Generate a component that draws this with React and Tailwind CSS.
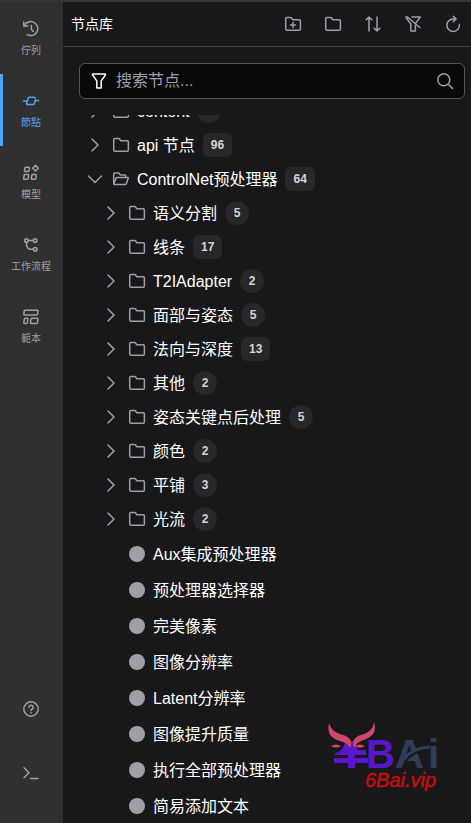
import React, { useState } from "react";

const sideTabs = [
  { id: "queue", label: "佇列" },
  { id: "nodes", label: "節點" },
  { id: "models", label: "模型" },
  { id: "workflows", label: "工作流程" },
  { id: "templates", label: "範本" },
];

const tree = [
  { name: "content", count: 7 },
  { name: "api 节点", count: 96 },
  {
    name: "ControlNet预处理器",
    count: 64,
    open: true,
    folders: [
      { name: "语义分割", count: 5 },
      { name: "线条", count: 17 },
      { name: "T2IAdapter", count: 2 },
      { name: "面部与姿态", count: 5 },
      { name: "法向与深度", count: 13 },
      { name: "其他", count: 2 },
      { name: "姿态关键点后处理", count: 5 },
      { name: "颜色", count: 2 },
      { name: "平铺", count: 3 },
      { name: "光流", count: 2 },
    ],
    nodes: [
      "Aux集成预处理器",
      "预处理器选择器",
      "完美像素",
      "图像分辨率",
      "Latent分辨率",
      "图像提升质量",
      "执行全部预处理器",
      "简易添加文本",
    ],
  },
];

const iconPaths = {
  queue: (
    <>
      <path d="M.8 1v4h4" />
      <path d="M1.4 4.8A7 7 0 1 1 4.2 13.6" />
      <path d="M8.4 4.6v3.9l2 2" />
    </>
  ),
  nodes: (
    <>
      <path d="M.5 8h3.2M12.2 7.5h3.3" />
      <path d="M12.4 5.4l-.3-.6a1 1 0 0 0-.9-.6H6.2a1 1 0 0 0-.9.6L3.7 10a1 1 0 0 0 .9 1.6h5.6a1 1 0 0 0 .9-.6l1.3-3.7" />
    </>
  ),
  models: (
    <>
      <path d="M12.5.4l2.8 2.8L12.5 6 9.7 3.2z" />
      <path d="M3.1 2.2h2.6a.8.8 0 0 1 .8.9l-.4 2.5a1 1 0 0 1-1 .8H2.3a.8.8 0 0 1-.8-.9L2 3a1 1 0 0 1 1.1-.8z" />
      <path d="M2.2 9.6h2.6a.8.8 0 0 1 .8.9l-.4 2.9a1 1 0 0 1-1 .8H1.4a.8.8 0 0 1-.8-.9l.5-2.9a1 1 0 0 1 1.1-.8zM9.9 9.6h2.6a.8.8 0 0 1 .8.9l-.4 2.9a1 1 0 0 1-1 .8H9.1a.8.8 0 0 1-.8-.9l.5-2.9a1 1 0 0 1 1.1-.8z" />
    </>
  ),
  workflows: (
    <>
      <circle cx="3.4" cy="3.5" r="1.8" />
      <circle cx="12.2" cy="3.5" r="1.8" />
      <circle cx="12.2" cy="12.3" r="1.8" />
      <path d="M5.2 3.5h5.2M3.4 5.3c0 3.4.6 7 4 7h3" />
    </>
  ),
  templates: (
    <>
      <path d="M2.2 1.3h12a.8.8 0 0 1 .8.9l-.4 2.9a1 1 0 0 1-1 .8H1.6a.8.8 0 0 1-.8-.9l.4-2.9a1 1 0 0 1 1-.8z" />
      <path d="M2.4 9.3H4a.8.8 0 0 1 .8.9l-.5 3.5a1 1 0 0 1-1 .8H1.6a.8.8 0 0 1-.8-.9l.6-3.5a1 1 0 0 1 1-.8zM9 9.3h5.2a.8.8 0 0 1 .8.9l-.5 3.5a1 1 0 0 1-1 .8H8.2a.8.8 0 0 1-.8-.9l.6-3.5a1 1 0 0 1 1-.8z" />
    </>
  ),
  help: (
    <>
      <circle cx="8" cy="8" r="7.2" />
      <path d="M5.9 6.3a2.1 2.1 0 1 1 3 1.9c-.6.3-.9.6-.9 1.2M8 11.6v.4" />
    </>
  ),
  terminal: <path d="M1 2.8l5 5-5 5M7.5 13.4h7.5" />,
  folder: (
    <path d="M2 1.4h3.5a1 1 0 0 1 .8.4l1.5 2h6.4a1.2 1.2 0 0 1 1.2 1.2v8a1.3 1.3 0 0 1-1.3 1.3H2A1.3 1.3 0 0 1 .7 13V2.7A1.3 1.3 0 0 1 2 1.4z" />
  ),
  folderPlus: (
    <>
      <path d="M2 1.4h3.5a1 1 0 0 1 .8.4l1.5 2h6.4a1.2 1.2 0 0 1 1.2 1.2v8a1.3 1.3 0 0 1-1.3 1.3H2A1.3 1.3 0 0 1 .7 13V2.7A1.3 1.3 0 0 1 2 1.4z" />
      <path d="M8 6.4v5M5.5 8.9h5" />
    </>
  ),
  folderOpen: (
    <>
      <path d="M12.8 6.4V5a1 1 0 0 0-1-1H7.4L5.8 2H1.7a1 1 0 0 0-1 1v10.2" />
      <path d="M4 6.5h10.7a.6.6 0 0 1 .6.8L13.2 13a1 1 0 0 1-.9.6H1a.4.4 0 0 1-.3-.5L3.1 7.1a1 1 0 0 1 .9-.6z" />
    </>
  ),
  sort: (
    <path d="M4 15V1M1.2 3.8L4 1l2.8 2.8M12 1v14M9.2 12.2L12 15l2.8-2.8" />
  ),
  filter: (
    <path d="M2 1h12c.5 0 .8.6.4 1L10.2 7.9V15H5.8V7.9L1.6 2c-.4-.4-.1-1 .4-1z" />
  ),
  filterSlash: (
    <>
      <path d="M7 1h8.3L10.6 7.4M.7 1L5.8 8v7h4.6V9.5" />
      <path d="M2.2.8l12.6 10.7" />
    </>
  ),
  refresh: (
    <>
      <path d="M14.4 8.6A6.3 6.3 0 1 1 8.3 2.9h2.5" />
      <path d="M8.2.3l2.7 2.6-2.7 2.7" />
    </>
  ),
  search: (
    <>
      <circle cx="6.8" cy="6.8" r="6" />
      <path d="M11.2 11.2l4.3 4.3" />
    </>
  ),
  right: <path d="M5 2l6 6-6 6" />,
  down: <path d="M1.5 5L8 11.5 14.5 5" />,
};

function Icon({ name, className = "size-4", width = 1.5 }) {
  return (
    <svg
      viewBox="0 0 16 16"
      fill="none"
      stroke="currentColor"
      strokeWidth={width}
      strokeLinecap="round"
      strokeLinejoin="round"
      className={`shrink-0 overflow-visible ${className}`}
      aria-hidden="true"
    >
      {iconPaths[name]}
    </svg>
  );
}

function Folder({ folder, depth = 0 }) {
  const [open, setOpen] = useState(!!folder.open);

  return (
    <li>
      <button
        onClick={() => setOpen(!open)}
        aria-expanded={open}
        className={`flex h-[34px] w-full items-center text-left text-base text-white ${
          depth ? "pl-[34px]" : "pl-[18px]"
        }`}
      >
        <span className="mr-1 flex w-7 justify-center text-zinc-400">
          <Icon name={open ? "down" : "right"} />
        </span>
        <Icon
          name={open ? "folderOpen" : "folder"}
          className="size-4 text-zinc-400"
        />
        <span className="ml-2 pt-0.5 whitespace-nowrap">{folder.name}</span>
        <span
          className={`ml-2 flex h-6 items-center justify-center bg-zinc-800 text-xs font-bold text-zinc-300 ${
            folder.count > 9 ? "rounded-md px-2" : "w-6 rounded-full"
          }`}
        >
          {folder.count}
        </span>
      </button>
      {open && folder.folders && (
        <ul>
          {folder.folders.map((child) => (
            <Folder key={child.name} folder={child} depth={1} />
          ))}
          {folder.nodes.map((node) => (
            <li key={node}>
              <button className="flex h-9 w-full items-center gap-2 pl-[66px] text-left text-base whitespace-nowrap text-white">
                <span className="size-4 rounded-full bg-zinc-400" />
                <span className="pt-0.5">{node}</span>
              </button>
            </li>
          ))}
        </ul>
      )}
    </li>
  );
}

function Logo() {
  return (
    <svg
      viewBox="0 0 116 78"
      className="pointer-events-none absolute right-[28px] bottom-[29px] w-[116px] overflow-visible"
    >
      {/* bull head */}
      <g fill="#5b16cc">
        <path d="M21 25h7v27h-7z" />
        <path d="M18 26l5 2v11H7l2-2c5-2 8-6 9-11z" />
        <path d="M28 26l3 8h8v5H26z" />
        <path d="M7 42h34v5H7z" />
      </g>
      <g fill="#d04866">
        <path d="M2 7c-2 9 1 14 8 17 6 2 11 3 13 8 3-7 0-11-7-13C9 17 4 14 2 7z" />
        <path d="M47 6c3 9-1 14-8 17-5 2-9 3-12 9-2-7 0-11 7-13 7-2 12-5 13-13z" />
        <path d="M4 30q5-3 10 0-5 3-10 0zM28 30q5-3 10 0-5 3-10 0z" />
      </g>
      <g fontSize="40" fontWeight="700">
        <text x="39" y="52" fill="#5b16cc">
          B
        </text>
        <text x="68" y="52" fill="#303d59">
          A
        </text>
        <text x="101" y="52" fill="#303d59">
          i
        </text>
      </g>
      <path
        d="M78 46c6-8 13-12 25-13"
        fill="none"
        stroke="#18181b"
        strokeWidth="2"
      />
      <path
        d="M75 45c7-9 14-13 28-14"
        fill="none"
        stroke="#303d59"
        strokeWidth="3"
      />
      <text
        x="38"
        y="71"
        fontSize="20"
        fontStyle="italic"
        fill="#c40c0c"
        stroke="#c40c0c"
        strokeWidth="0.5"
      >
        6Bai.vip
      </text>
    </svg>
  );
}

export default function App() {
  const [tab, setTab] = useState("nodes");
  const [query, setQuery] = useState("");

  return (
    <div className="relative flex h-screen overflow-hidden border-t-2 border-[#363638] bg-zinc-900 font-['Liberation_Sans','Noto_Sans_CJK_SC',sans-serif]">
      <nav className="flex w-[63px] shrink-0 flex-col bg-[#303030] pb-[18px] font-['Liberation_Sans','Noto_Sans_CJK_TC',sans-serif] text-[10px] text-[#a0a0a0]">
        {sideTabs.map((item) => (
          <button
            key={item.id}
            onClick={() => setTab(item.id)}
            className={`flex h-[72px] flex-col items-center gap-1.5 border-l-[3px] pt-[19px] pr-1 leading-4 ${
              tab === item.id
                ? "border-blue-400 text-blue-400"
                : "border-transparent"
            }`}
          >
            <Icon name={item.id} />
            <span>{item.label}</span>
          </button>
        ))}
        <button
          aria-label="Help"
          className="mt-auto flex h-16 items-center justify-center pr-px"
        >
          <Icon name="help" />
        </button>
        <button
          aria-label="Terminal"
          className="flex h-16 items-center justify-center pr-px"
        >
          <Icon name="terminal" />
        </button>
      </nav>

      <main className="flex min-w-0 flex-1 flex-col">
        <header className="flex h-[45px] shrink-0 items-center justify-between border-b border-[#434346] pr-[10px] pl-2">
          <h1 className="text-sm text-white">节点库</h1>
          <div className="flex gap-6 text-zinc-400">
            <button aria-label="New folder">
              <Icon name="folderPlus" />
            </button>
            <button aria-label="Folders">
              <Icon name="folder" />
            </button>
            <button aria-label="Sort">
              <Icon name="sort" />
            </button>
            <button aria-label="Clear filter">
              <Icon name="filterSlash" />
            </button>
            <button aria-label="Refresh">
              <Icon name="refresh" />
            </button>
          </div>
        </header>

        <div className="mt-4 mr-[6px] ml-4 flex h-9 shrink-0 items-center rounded-md border border-zinc-600 bg-zinc-950 px-[11px]">
          <button aria-label="Filter" className="text-white">
            <Icon name="filter" />
          </button>
          <input
            type="text"
            aria-label="搜索节点"
            placeholder="搜索节点..."
            value={query}
            onChange={(e) => setQuery(e.target.value)}
            className="min-w-0 flex-1 bg-transparent pl-[9px] text-base text-white outline-none placeholder:text-zinc-400"
          />
          <Icon name="search" className="size-4 text-zinc-400" />
        </div>

        <div className="mt-4 min-h-0 flex-1 overflow-hidden">
          <ul className="-mt-[21px]">
            {tree.map((folder) => (
              <Folder key={folder.name} folder={folder} />
            ))}
          </ul>
        </div>
      </main>

      <Logo />
    </div>
  );
}
